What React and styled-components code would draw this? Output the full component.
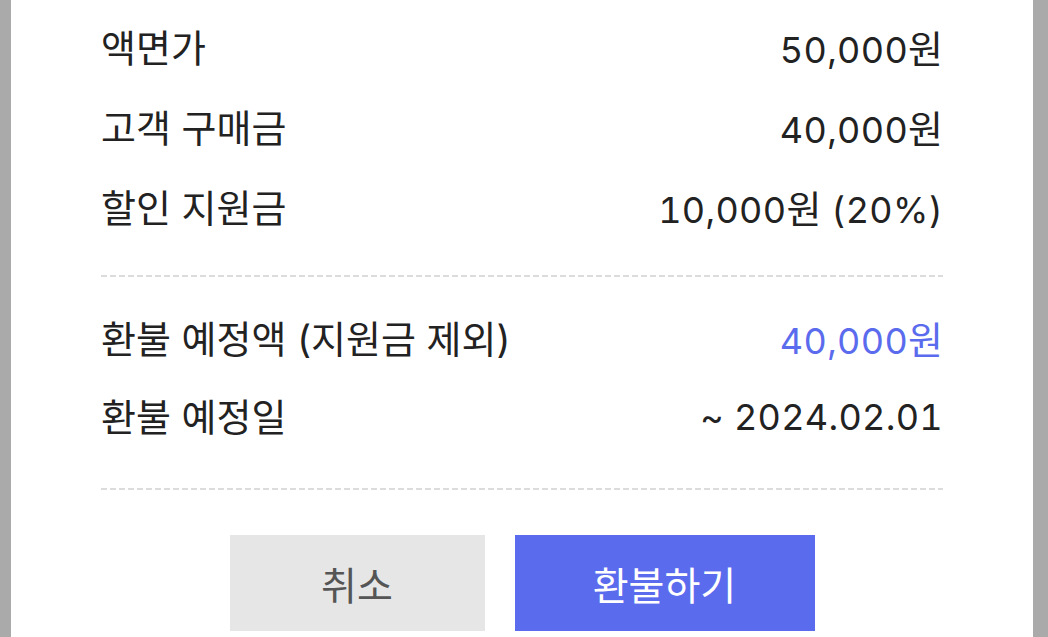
import React from "react";
import styled, { createGlobalStyle } from "styled-components";

const Global = createGlobalStyle`
  html, body { margin: 0; padding: 0; background: #aaaaaa; }
  body { font-family: Inter, "Noto Sans CJK KR", sans-serif; }
`;

const Frame = styled.div`
  height: 637px;
  box-sizing: border-box;
  padding: 0 15px 0 11px;
  background: #aaaaaa;
  display: flex;
`;

const Panel = styled.div`
  flex: 1;
  background: #ffffff;
  padding: 0 90px;
  display: flex;
  flex-direction: column;
  overflow: hidden;
`;

const Section = styled.div`
  display: flex;
  flex-direction: column;
  padding: ${(p) => p.$pad};
`;

const Row = styled.div`
  display: flex;
  justify-content: space-between;
  align-items: center;
  height: ${(p) => p.$h || 80}px;
  font-size: 36px;
  line-height: 1;
  color: #222222;
`;

const Label = styled.span`
  font-family: Inter, "Noto Sans CJK KR", sans-serif;
  font-size: 38px;
`;

const Value = styled.span`
  font-family: Inter, "Noto Sans CJK KR", sans-serif;
  font-feature-settings: "tnum" 1;
  letter-spacing: 0.3px;
  color: ${(p) => (p.$accent ? "#5b6bed" : "#222222")};
`;

const Ko = styled.span`
  font-family: "Noto Sans CJK KR", sans-serif;
  font-size: 38px;
  letter-spacing: 0;
`;

const Dashed = styled.div`
  height: 2px;
  background-image: linear-gradient(to right, #dcdcdc 6px, transparent 6px);
  background-size: 9px 2px;
  background-repeat: repeat-x;
`;

const Buttons = styled.div`
  display: flex;
  justify-content: center;
  gap: 30px;
  padding-top: 45px;
`;

const Button = styled.button`
  width: ${(p) => p.$w}px;
  height: 96px;
  border: none;
  border-radius: 0;
  padding: 0;
  font-family: "Noto Sans CJK KR", sans-serif;
  font-size: 39px;
  background: ${(p) => (p.$primary ? "#5b6bed" : "#e6e6e6")};
  color: ${(p) => (p.$primary ? "#ffffff" : "#555555")};
  cursor: pointer;
`;

const Money = ({ n, children }) => (
  <>
    {n}
    <Ko>원</Ko>
    {children}
  </>
);

export default function App() {
  return (
    <>
      <Global />
      <Frame>
        <Panel>
          <Section $pad="8px 0 27px">
            <Row>
              <Label>액면가</Label>
              <Value><Money n="50,000" /></Value>
            </Row>
            <Row>
              <Label>고객 구매금</Label>
              <Value><Money n="40,000" /></Value>
            </Row>
            <Row>
              <Label>할인 지원금</Label>
              <Value><Money n="10,000"> (20%)</Money></Value>
            </Row>
          </Section>
          <Dashed />
          <Section $pad="23px 0 32px">
            <Row $h={78}>
              <Label>환불 예정액 (지원금 제외)</Label>
              <Value $accent><Money n="40,000" /></Value>
            </Row>
            <Row $h={78}>
              <Label>환불 예정일</Label>
              <Value>~ 2024.02.01</Value>
            </Row>
          </Section>
          <Dashed />
          <Buttons>
            <Button $w={255}>취소</Button>
            <Button $w={300} $primary>환불하기</Button>
          </Buttons>
        </Panel>
      </Frame>
    </>
  );
}
